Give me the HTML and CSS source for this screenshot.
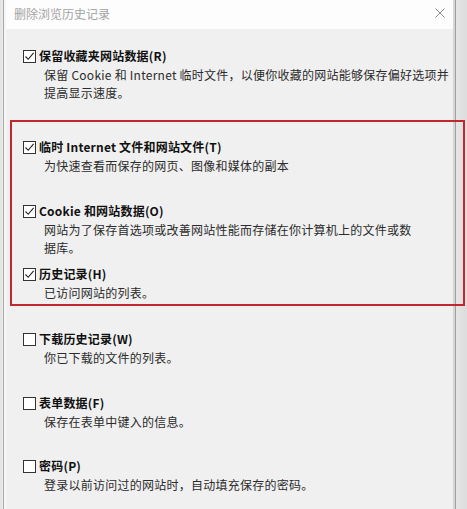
FILE: index.html
```html
<!DOCTYPE html>
<html lang="zh-CN">
<head>
<meta charset="utf-8">
<title>删除浏览历史记录</title>
<link rel="stylesheet" href="styles.css">
</head>
<body>
<div class="screen">
  <div class="dialog">
    <div class="titlebar">
      <span class="title">删除浏览历史记录</span>
      <svg class="close" width="10" height="10" viewBox="0 0 10 10"><path d="M0.5 0.5 L9.5 9.5 M9.5 0.5 L0.5 9.5" stroke="#8c8c8c" stroke-width="1" fill="none"/></svg>
    </div>
    <div class="content">
      <div class="item first">
        <div class="row"><span class="box checked"><svg width="11" height="11" viewBox="0 0 11 11"><path d="M1.5 5.5 L4.2 8.3 L9.6 1.8" stroke="#222" stroke-width="1.1" fill="none"/></svg></span><span class="label">保留收藏夹网站数据(R)</span></div>
        <div class="desc">保留 Cookie 和 Internet 临时文件，以便你收藏的网站能够保存偏好选项并<br>提高显示速度。</div>
      </div>
      <div class="highlight">
        <div class="item">
          <div class="row"><span class="box checked"><svg width="11" height="11" viewBox="0 0 11 11"><path d="M1.5 5.5 L4.2 8.3 L9.6 1.8" stroke="#222" stroke-width="1.1" fill="none"/></svg></span><span class="label">临时 Internet 文件和网站文件(T)</span></div>
          <div class="desc">为快速查看而保存的网页、图像和媒体的副本</div>
        </div>
        <div class="item gap-l">
          <div class="row"><span class="box checked"><svg width="11" height="11" viewBox="0 0 11 11"><path d="M1.5 5.5 L4.2 8.3 L9.6 1.8" stroke="#222" stroke-width="1.1" fill="none"/></svg></span><span class="label">Cookie 和网站数据(O)</span></div>
          <div class="desc">网站为了保存首选项或改善网站性能而存储在你计算机上的文件或数<br>据库。</div>
        </div>
        <div class="item gap-s">
          <div class="row"><span class="box checked"><svg width="11" height="11" viewBox="0 0 11 11"><path d="M1.5 5.5 L4.2 8.3 L9.6 1.8" stroke="#222" stroke-width="1.1" fill="none"/></svg></span><span class="label">历史记录(H)</span></div>
          <div class="desc">已访问网站的列表。</div>
        </div>
      </div>
      <div class="item after-box">
        <div class="row"><span class="box"></span><span class="label">下载历史记录(W)</span></div>
        <div class="desc">你已下载的文件的列表。</div>
      </div>
      <div class="item gap-l">
        <div class="row"><span class="box"></span><span class="label">表单数据(F)</span></div>
        <div class="desc">保存在表单中键入的信息。</div>
      </div>
      <div class="item gap-m">
        <div class="row"><span class="box"></span><span class="label">密码(P)</span></div>
        <div class="desc">登录以前访问过的网站时，自动填充保存的密码。</div>
      </div>
    </div>
  </div>
</div>
</body>
</html>
```

FILE: styles.css
```css
html, body {
  margin: 0;
  padding: 0;
}

body {
  font-family: "Noto Sans CJK SC", "Noto Sans", "Liberation Sans", sans-serif;
  background: #e9e9e9;
}

.screen {
  width: 467px;
  height: 509px;
  overflow: hidden;
  background:
    linear-gradient(to right,
      #e2e2e2 0, #ececec 3px, #a9a9a9 3px, #a9a9a9 4px, #f6f6f6 4px, #f6f6f6 6px,
      transparent 6px, transparent 453px,
      #d6d6d6 453px, #d6d6d6 455px, #9f9f9f 455px, #9f9f9f 456px, #e6e6e6 456px, #dcdcdc 467px);
}

.dialog {
  margin-left: 6px;
  width: 447px;
  height: 509px;
  display: flex;
  flex-direction: column;
}

.titlebar {
  height: 29px;
  background: #fdfdfd;
  display: flex;
  align-items: center;
  justify-content: space-between;
  padding: 0 8px 0 8px;
  box-sizing: border-box;
}

.title {
  font-size: 12px;
  color: #a3a3a3;
  line-height: 16px;
  margin-top: -1px;
}

.close {
  display: block;
  margin-top: -3px;
}

.content {
  flex: 1;
  background: #f0f0f0;
  padding-top: 17px;
}

.item {
  margin-left: 17px;
}

.row {
  display: flex;
  align-items: center;
  height: 20px;
  gap: 3px;
}

.box {
  width: 13px;
  height: 13px;
  box-sizing: border-box;
  border: 1px solid #333;
  background: #fff;
  display: flex;
  align-items: center;
  justify-content: center;
  flex: none;
}

.box svg {
  display: block;
}

.label {
  font-size: 12px;
  font-weight: 700;
  color: #111;
  line-height: 20px;
  white-space: nowrap;
  letter-spacing: 0.2px;
}

.desc {
  padding-left: 21px;
  font-size: 12px;
  line-height: 18px;
  color: #2b2b2b;
  white-space: nowrap;
  letter-spacing: 0.25px;
}

.highlight {
  margin-top: 18px;
  margin-left: 4px;
  width: 455px;
  box-sizing: border-box;
  border: 2px solid #c4262e;
  padding: 15px 0 2px 11px;
}

.highlight .item {
  margin-left: 0;
}

.gap-l {
  margin-top: 26px;
}

.gap-m {
  margin-top: 25px;
}

.highlight .gap-s {
  margin-top: 7px;
}

.highlight .gap-l {
  margin-top: 26px;
}

.after-box {
  margin-top: 23px;
}
```
